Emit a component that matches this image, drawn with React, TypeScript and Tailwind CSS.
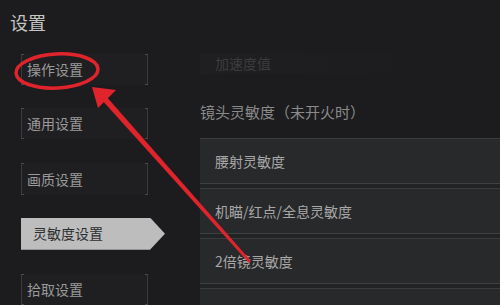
import React from "react";

const FONT = { fontFamily: '"Noto Sans CJK SC", "Noto Sans", sans-serif' };

function Ticks() {
  return (
    <>
      <span className="absolute left-0 top-0 h-full w-px bg-[#3a3a3c]" />
      <span className="absolute left-0 top-0 h-px w-[3px] bg-[#4a4a4c]" />
      <span className="absolute left-0 bottom-0 h-px w-[3px] bg-[#4a4a4c]" />
      <span className="absolute right-0 top-0 h-full w-px bg-[#3a3a3c]" />
      <span className="absolute right-0 top-0 h-px w-[3px] bg-[#4a4a4c]" />
      <span className="absolute right-0 bottom-0 h-px w-[3px] bg-[#4a4a4c]" />
    </>
  );
}

function NavItem({ label, top }: { label: string; top: string }) {
  return (
    <div className={`relative ml-[21px] ${top} flex h-[32px] w-[127px] items-center bg-[#1f1f21] pl-[6px] text-[14px] text-[#9a9a9a]`}>
      <Ticks />
      {label}
    </div>
  );
}

function Row({ label }: { label: string }) {
  return (
    <div className="flex h-[45px] items-center border-t border-[#3a3b3d] bg-[#28292b] pl-[15px] text-[14px] text-[#a8a8a8]">
      {label}
    </div>
  );
}

export default function App() {
  return (
    <div className="relative flex h-[305px] w-[500px] overflow-hidden bg-[#1c1c1e]" style={FONT}>
      {/* sidebar */}
      <div className="flex w-[200px] shrink-0 flex-col">
        <div className="pl-[10px] pt-[10px] text-[18px] leading-[24px] text-[#c4c4c4]">设置</div>
        <NavItem label="操作设置" top="mt-[20px]" />
        <NavItem label="通用设置" top="mt-[23px]" />
        <NavItem label="画质设置" top="mt-[24px]" />
        <div className="relative ml-[21px] mt-[23px] flex h-[33px] w-[144px] items-center bg-[#bdbdbd] pl-[12px] text-[14px] text-[#2e2e2e] [clip-path:polygon(0_0,129px_0,144px_50%,129px_100%,0_100%)]">
          灵敏度设置
        </div>
        <NavItem label="拾取设置" top="mt-[24px]" />
      </div>

      {/* content */}
      <div className="flex flex-1 flex-col">
        <div className="mt-[53px] flex h-[29px] w-[247px] items-center bg-gradient-to-r from-[#1f1f21] to-[#1c1c1e] pl-[15px] text-[14px] text-[#3c3c3e]">
          加速度值
        </div>
        <div className="mt-[27px] text-[15px] leading-[22px] text-[#8a8a8a]">镜头灵敏度（未开火时）</div>
        <div className="mt-[15px] flex flex-col">
          <Row label="腰射灵敏度" />
          <div className="h-[5px] border-t border-[#3e3f41] bg-[#222325]" />
          <Row label="机瞄/红点/全息灵敏度" />
          <div className="h-[5px] border-t border-[#3e3f41] bg-[#222325]" />
          <Row label="2倍镜灵敏度" />
          <div className="h-[5px] border-t border-[#3e3f41] bg-[#222325]" />
          <div className="h-[20px] border-t border-[#3a3b3d] bg-[#28292b]" />
        </div>
      </div>

      {/* red annotation */}
      <svg className="pointer-events-none absolute left-0 top-0" width="500" height="305" viewBox="0 0 500 305">
        <ellipse cx="57" cy="71" rx="41" ry="17" fill="none" stroke="#e0242c" strokeWidth="3.5" transform="rotate(-3 57 71)" />
        <polygon points="105,95 101,99 249,263 251,261" fill="#e0242c" />
        <polygon points="92,87 116,90 98,108" fill="#e0242c" />
      </svg>
    </div>
  );
}
